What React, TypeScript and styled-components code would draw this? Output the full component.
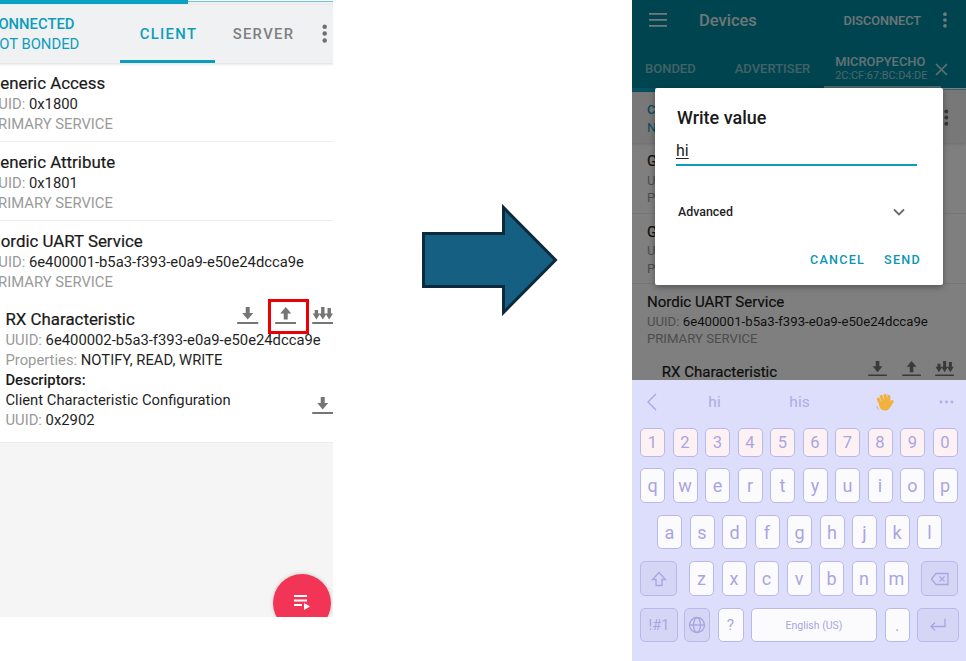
import React from "react";
import styled, { createGlobalStyle } from "styled-components";

const Global = createGlobalStyle`
  html, body { margin: 0; padding: 0; background: #fff; }
  body { font-family: Roboto, "Liberation Sans", sans-serif; }
`;

const Page = styled.div`
  width: 966px; height: 661px; display: flex; align-items: flex-start; overflow: hidden; background: #fff;
`;

/* left phone */
const LeftPhone = styled.section`
  position: relative; flex: 0 0 333px; height: 617px; overflow: hidden; background: #f5f5f5;
`;
const LeftInner = styled.div`
  width: 375px; margin-left: -28px;
`;
const Screen = styled.div<{ $size: number }>`
  font-size: ${(p) => p.$size}px; line-height: 1.35em; color: #1c1c1c;
`;

const Progress = styled.div`
  height: 5px; background: linear-gradient(#fff 0, #fff 1px, #6fc6d8 1px, #6fc6d8 2px, #eef0f2 2px);
`;
const ProgressFill = styled.div`
  width: 57.6%; height: 4px; background: #0aa2c4;
`;
const ConnBar = styled.div<{ $h: number }>`
  height: ${(p) => p.$h}px; display: flex; align-items: stretch; padding-left: 1.13em; background: #f0f1f3;
  box-shadow: 0 1px 3px rgba(0,0,0,.15); position: relative;
`;
const ConnState = styled.div`
  flex: 1; display: flex; flex-direction: column; justify-content: center; color: #0d9dbb; padding-top: 2px;
`;
const ConnStrong = styled.span`font-weight: 500;`;
const Tab = styled.div<{ $active?: boolean }>`
  width: 6.42em; box-sizing: border-box; padding: 2px 0 0 2px; display: flex; align-items: center; justify-content: center; font-weight: 500; letter-spacing: .09em;
  color: ${(p) => (p.$active ? "#0d9dbb" : "#7d7f81")};
  box-shadow: ${(p) => (p.$active ? "inset 0 -3px 0 #0d9dbb" : "none")};
`;
const Dots = styled.svg`
  width: .5em; height: 1.3em; fill: currentColor; align-self: center; flex: none;
`;
const ConnDots = styled(Dots)`
  color: #6d6f71; margin: 0 1.23em 0 .77em;
`;

const Service = styled.div`
  background: #fff; padding: .7em .9em .41em 1.13em; border-bottom: 1px solid #ececec;
`;
const Title = styled.div`font-size: 1.14em; line-height: 1.28em; color: #1a1a1a; font-weight: 400; -webkit-text-stroke: .2px #1a1a1a;`;
const Line = styled.div`white-space: nowrap; color: #1f1f1f;`;
const Muted = styled.span`color: #9a9a9a;`;
const Bold = styled.div`font-weight: 500; color: #1a1a1a;`;

const Characteristic = styled.div`
  margin: 1.1em 0 .33em 1.13em;
`;
const TitleRow = styled.div`
  display: flex; align-items: flex-start; justify-content: space-between;
`;
const ActionIcons = styled.div`
  display: flex; gap: 1.08em; color: #757575; margin-top: -.15em;
`;
const DescIcons = styled(ActionIcons)`
  margin: .4em 0 -.4em;
`;
const Action = styled.div`
  position: relative; display: flex; color: #757575;
`;
const Icon = styled.svg`
  width: 1.45em; height: 1.15em; display: block; fill: currentColor;
`;
const Highlight = styled.div`
  position: absolute; left: -7px; top: -8px; width: 41px; height: 35px; box-sizing: border-box; border: 3px solid #ee0000;
`;
const Fab = styled.div`
  position: absolute; left: 273px; top: 574px; width: 58px; height: 58px; border-radius: 50%; background: #f23557;
  box-shadow: 0 0 4px rgba(0,0,0,.2); display: flex; align-items: flex-start; justify-content: center; padding-top: 21px; box-sizing: border-box;
`;
const FabIcon = styled.svg`width: 17px; height: 16px; fill: #fff;`;

/* arrow */
const BigArrow = styled.svg`
  flex: none; width: 139px; height: 113px; margin: 203px 0 0 87px;
`;

/* right phone */
const RightPhone = styled.section`
  flex: none; width: 334px; height: 661px; margin-left: auto; display: flex; flex-direction: column; background: #dcdefb;
`;
const AppArea = styled.div`
  position: relative; height: 380px; overflow: hidden; background: #fff; flex: none;
`;
const AppBar = styled.header`
  height: 88px; background: #00899e; color: #fff; display: flex; flex-direction: column;
`;
const BarTop = styled.div`
  height: 40px; display: flex; align-items: center; padding: 0 17px;
`;
const Hamburger = styled.svg`width: 18px; height: 14px; fill: currentColor; flex: none; opacity: .9;`;
const BarTitle = styled.div`
  flex: 1; margin-left: 32px; font-size: 16.5px; font-weight: 500; opacity: .85;
`;
const Disconnect = styled.div`font-size: 12.7px; font-weight: 500; opacity: .85; margin-right: 21px;`;
const WhiteDots = styled(Dots)`width: 6px; height: 16px; margin-right: 1px; opacity: .9;`;
const BarTabs = styled.div`
  flex: 1; display: flex; align-items: center; padding-left: 13px; position: relative;
`;
const BarTab = styled.div<{ $gap: number }>`
  font-size: 13px; font-weight: 500; opacity: .5; margin-right: ${(p) => p.$gap}px; padding-top: 8px;
`;
const ActiveTab = styled.div`
  position: relative; display: flex; align-items: center; align-self: stretch; padding-top: 10px;
  &::after { content: ""; position: absolute; left: -11px; right: 7px; bottom: 0; height: 2px; background: rgba(255,255,255,.6); }
`;
const ActiveText = styled.div`
  display: flex; flex-direction: column; line-height: 14px; opacity: .78;
`;
const ActiveName = styled.span`font-size: 12.9px; font-weight: 500;`;
const ActiveAddr = styled.span`font-size: 10.9px; opacity: .75;`;
const Close = styled.svg`width: 13px; height: 13px; stroke: currentColor; stroke-width: 1.7; margin-left: 8px; opacity: .75; fill: none;`;

const Scrim = styled.div`
  position: absolute; inset: 0; background: rgba(0,0,0,.5);
`;
const Dialog = styled.div`
  position: absolute; left: 23px; top: 88px; width: 288px; height: 197px; background: #fff; border-radius: 2px;
  box-shadow: 0 2px 6px rgba(0,0,0,.35); padding: 19px 26px 0 21px; box-sizing: border-box; display: flex; flex-direction: column;
`;
const DialogTitle = styled.div`
  font-size: 18px; line-height: 22px; font-weight: 500; color: #1a1a1a; margin-left: 1px;
`;
const Field = styled.div`
  margin-top: 10px; height: 25px; border-bottom: 2px solid #0d9dbb; font-size: 16px; line-height: 24px; color: #222;
`;
const Typed = styled.span`text-decoration: underline; text-underline-offset: 2px; text-decoration-thickness: 1px;`;
const Advanced = styled.div`
  margin: 38px 12px 0 2px; display: flex; align-items: center; justify-content: space-between;
  font-size: 12.4px; font-weight: 500; color: #1f1f1f;
`;
const Chevron = styled.svg`width: 12px; height: 8px; fill: none; stroke: #6b6b6b; stroke-width: 1.8;`;
const Buttons = styled.div`
  margin: 33px -4px 0 0; display: flex; justify-content: flex-end; gap: 19px; font-size: 12.6px; font-weight: 500; letter-spacing: 1.25px; color: #0b97b3;
`;

/* keyboard */
const Keyboard = styled.div`
  flex: 1; background: #dcdefb; color: #a8a5e2; display: flex; flex-direction: column;
`;
const Suggestions = styled.div`
  height: 48px; box-sizing: border-box; padding-bottom: 4px; display: grid; grid-template-columns: 40px repeat(3, 85px) 1fr; align-items: center; justify-items: center; font-size: 15.5px; color: #aeabe6;
`;
const BackChevron = styled.svg`width: 11px; height: 18px; fill: none; stroke: #a8a5e2; stroke-width: 1.3; margin-left: -2px;`;
const Emoji = styled.svg`width: 19px; height: 19px;`;
const More = styled.svg`width: 15px; height: 4px; fill: #aeabe6;`;
const KeyRow = styled.div<{ $h: number; $gap?: number; $pad?: number }>`
  height: ${(p) => p.$h}px; margin-bottom: ${(p) => p.$gap ?? 12}px; padding-left: ${(p) => p.$pad ?? 8}px; display: flex; gap: 7.5px;
`;
const Key = styled.div<{ $w?: number; $kind?: "num" | "func"; $ml?: number; $fs?: number }>`
  flex: none; box-sizing: border-box; width: ${(p) => p.$w ?? 25}px; margin-left: ${(p) => p.$ml ?? 0}px;
  border: 1px solid #bab8ea; border-radius: 5px; display: flex; align-items: center; justify-content: center;
  background: ${(p) => (p.$kind === "num" ? "#fdf1f4" : p.$kind === "func" ? "#d5d6f6" : "#fbfbfe")};
  font-size: ${(p) => p.$fs ?? 18}px; color: #a8a5e2;
`;
const KeyGlyph = styled.svg`width: 18px; height: 18px; fill: none; stroke: #a8a5e2; stroke-width: 1.3;`;

const DownPath = "M8.500 0h4v6H16l-5.500 6.500L5 6h3.500zM0 15h21v2H0z";
const UpPath = "M10.500 0L16 6.500h-3.500v6h-4v-6H5zM0 15h21v2H0z";
const TriplePath = "M2.500 3h3.400v3.500h2.100L4.200 12.500.4 6.500h2.100zM8.900 0h3.400v6.500h2.100l-3.800 6-3.800-6h2.100zM15.300 1h3.400v5.500h2.100L17 12.500l-3.800-6h2.100zM0 15h21v2H0z";

const DotsGlyph = () => (
  <>
    <circle cx="3" cy="2.500" r="2.100" />
    <circle cx="3" cy="9" r="2.100" />
    <circle cx="3" cy="15.500" r="2.100" />
  </>
);

const ServiceList = ({ highlight, barHeight }: { highlight?: boolean; barHeight: number }) => (
  <>
    <Progress><ProgressFill /></Progress>
    <ConnBar $h={barHeight}>
      <ConnState>
        <ConnStrong>CONNECTED</ConnStrong>
        <span>NOT BONDED</span>
      </ConnState>
      <Tab $active>CLIENT</Tab>
      <Tab>SERVER</Tab>
      <ConnDots viewBox="0 0 6 18"><DotsGlyph /></ConnDots>
    </ConnBar>
    <Service>
      <Title>Generic Access</Title>
      <Line><Muted>UUID:</Muted> 0x1800</Line>
      <Line><Muted>PRIMARY SERVICE</Muted></Line>
    </Service>
    <Service>
      <Title>Generic Attribute</Title>
      <Line><Muted>UUID:</Muted> 0x1801</Line>
      <Line><Muted>PRIMARY SERVICE</Muted></Line>
    </Service>
    <Service>
      <Title>Nordic UART Service</Title>
      <Line><Muted>UUID:</Muted> 6e400001-b5a3-f393-e0a9-e50e24dcca9e</Line>
      <Line><Muted>PRIMARY SERVICE</Muted></Line>
      <Characteristic>
        <TitleRow>
          <Title>RX Characteristic</Title>
          <ActionIcons>
            <Icon viewBox="0 0 21 17"><path d={DownPath} /></Icon>
            <Action>
              <Icon viewBox="0 0 21 17"><path d={UpPath} /></Icon>
              {highlight && <Highlight />}
            </Action>
            <Icon viewBox="0 0 21 17"><path d={TriplePath} /></Icon>
          </ActionIcons>
        </TitleRow>
        <Line><Muted>UUID:</Muted> 6e400002-b5a3-f393-e0a9-e50e24dcca9e</Line>
        <Line><Muted>Properties:</Muted> NOTIFY, READ, WRITE</Line>
        <Bold>Descriptors:</Bold>
        <TitleRow>
          <Line>Client Characteristic Configuration</Line>
          <DescIcons>
            <Icon viewBox="0 0 21 17"><path d={DownPath} /></Icon>
          </DescIcons>
        </TitleRow>
        <Line><Muted>UUID:</Muted> 0x2902</Line>
      </Characteristic>
    </Service>
  </>
);

const letters1 = "qwertyuiop".split("");
const letters2 = "asdfghjkl".split("");
const letters3 = "zxcvbnm".split("");
const digits = "1234567890".split("");

export default function App() {
  return (
    <Page>
      <Global />
      <LeftPhone>
        <LeftInner>
          <Screen $size={14.8}>
            <ServiceList highlight barHeight={58} />
          </Screen>
        </LeftInner>
        <Fab>
          <FabIcon viewBox="0 0 17 16">
            <path d="M0 0h13v2H0zM0 4.500h13v2H0zM0 9h8v2H0zM10 8l6 3.500-6 3.500z" />
          </FabIcon>
        </Fab>
      </LeftPhone>

      <BigArrow viewBox="420 203 139 113">
        <path d="M423.500 233.500H503.500V207.500L555.500 260L503.500 312.500V286.500H423.500Z" fill="#156082" stroke="#0c2a3b" strokeWidth="3" />
      </BigArrow>

      <RightPhone>
        <AppArea>
          <AppBar>
            <BarTop>
              <Hamburger viewBox="0 0 18 14"><path d="M0 0h18v1.800H0zM0 6h18v1.800H0zM0 12h18v1.800H0z" /></Hamburger>
              <BarTitle>Devices</BarTitle>
              <Disconnect>DISCONNECT</Disconnect>
              <WhiteDots viewBox="0 0 6 18"><DotsGlyph /></WhiteDots>
            </BarTop>
            <BarTabs>
              <BarTab $gap={39}>BONDED</BarTab>
              <BarTab $gap={25}>ADVERTISER</BarTab>
              <ActiveTab>
                <ActiveText>
                  <ActiveName>MICROPYECHO</ActiveName>
                  <ActiveAddr>2C:CF:67:BC:D4:DE</ActiveAddr>
                </ActiveText>
                <Close viewBox="0 0 13 13"><path d="M1 1l11 11M12 1L1 12" /></Close>
              </ActiveTab>
            </BarTabs>
          </AppBar>
          <Screen $size={13.2}>
            <ServiceList barHeight={50} />
          </Screen>
          <Scrim />
          <Dialog>
            <DialogTitle>Write value</DialogTitle>
            <Field><Typed>hi</Typed></Field>
            <Advanced>
              <span>Advanced</span>
              <Chevron viewBox="0 0 12 8"><path d="M1 1.500l5 5 5-5" /></Chevron>
            </Advanced>
            <Buttons>
              <span>CANCEL</span>
              <span>SEND</span>
            </Buttons>
          </Dialog>
        </AppArea>

        <Keyboard>
          <Suggestions>
            <BackChevron viewBox="0 0 11 18"><path d="M10 1L2 9l8 8" /></BackChevron>
            <span>hi</span>
            <span>his</span>
            <Emoji viewBox="0 0 20 20">
              <g stroke="#f2b13c" strokeWidth="3.200" strokeLinecap="round">
                <path d="M6 12L3.500 6.500M9 10L6.500 3.500M12 9.500L10.500 2.500M14.500 10L14.500 4" />
                <path d="M15.500 13L18 9" />
              </g>
              <ellipse cx="10.500" cy="13" rx="6" ry="5.500" fill="#f2b13c" />
              <path d="M2 14c.3 1.500 1 2.700 2 3.500M13 2c1.500.2 2.500 1 3 2" stroke="#c9a58a" strokeWidth="1" fill="none" />
            </Emoji>
            <More viewBox="0 0 15 4"><circle cx="2" cy="2" r="1.400" /><circle cx="7.500" cy="2" r="1.400" /><circle cx="13" cy="2" r="1.400" /></More>
          </Suggestions>
          <KeyRow $h={29} $gap={11}>
            {digits.map((d) => <Key key={d} $kind="num" $fs={16.500}>{d}</Key>)}
          </KeyRow>
          <KeyRow $h={35}>
            {letters1.map((l) => <Key key={l}>{l}</Key>)}
          </KeyRow>
          <KeyRow $h={34} $pad={25}>
            {letters2.map((l) => <Key key={l}>{l}</Key>)}
          </KeyRow>
          <KeyRow $h={35}>
            <Key $w={37} $kind="func">
              <KeyGlyph viewBox="0 0 18 18"><path d="M9 2.500L2.500 9.500H6V15.500H12V9.500H15.500Z" /></KeyGlyph>
            </Key>
            <Key $ml={4.500}>z</Key>
            {letters3.slice(1).map((l) => <Key key={l}>{l}</Key>)}
            <Key $w={37} $kind="func" $ml={4.500}>
              <KeyGlyph viewBox="0 0 18 18"><path d="M5 3.500H17V14.500H5L0.500 9ZM8.500 6.500l5 5M13.500 6.500l-5 5" /></KeyGlyph>
            </Key>
          </KeyRow>
          <KeyRow $h={34} $gap={0}>
            <Key $w={38} $kind="func" $fs={14.500}>!#1</Key>
            <Key $w={26} $kind="func" $ml={-1.500}>
              <KeyGlyph viewBox="0 0 18 18"><circle cx="9" cy="9" r="7.500" /><ellipse cx="9" cy="9" rx="3.500" ry="7.500" /><path d="M1.500 9h15" /></KeyGlyph>
            </Key>
            <Key $w={26} $fs={15.500}>?</Key>
            <Key $w={126} $fs={10.500}>English (US)</Key>
            <Key $w={25} $fs={16}>.</Key>
            <Key $w={42} $kind="func" $ml={-0.500}>
              <KeyGlyph viewBox="0 0 18 18"><path d="M16 2.500V10.500H2M6 6.500l-4 4 4 4" /></KeyGlyph>
            </Key>
          </KeyRow>
        </Keyboard>
      </RightPhone>
    </Page>
  );
}
